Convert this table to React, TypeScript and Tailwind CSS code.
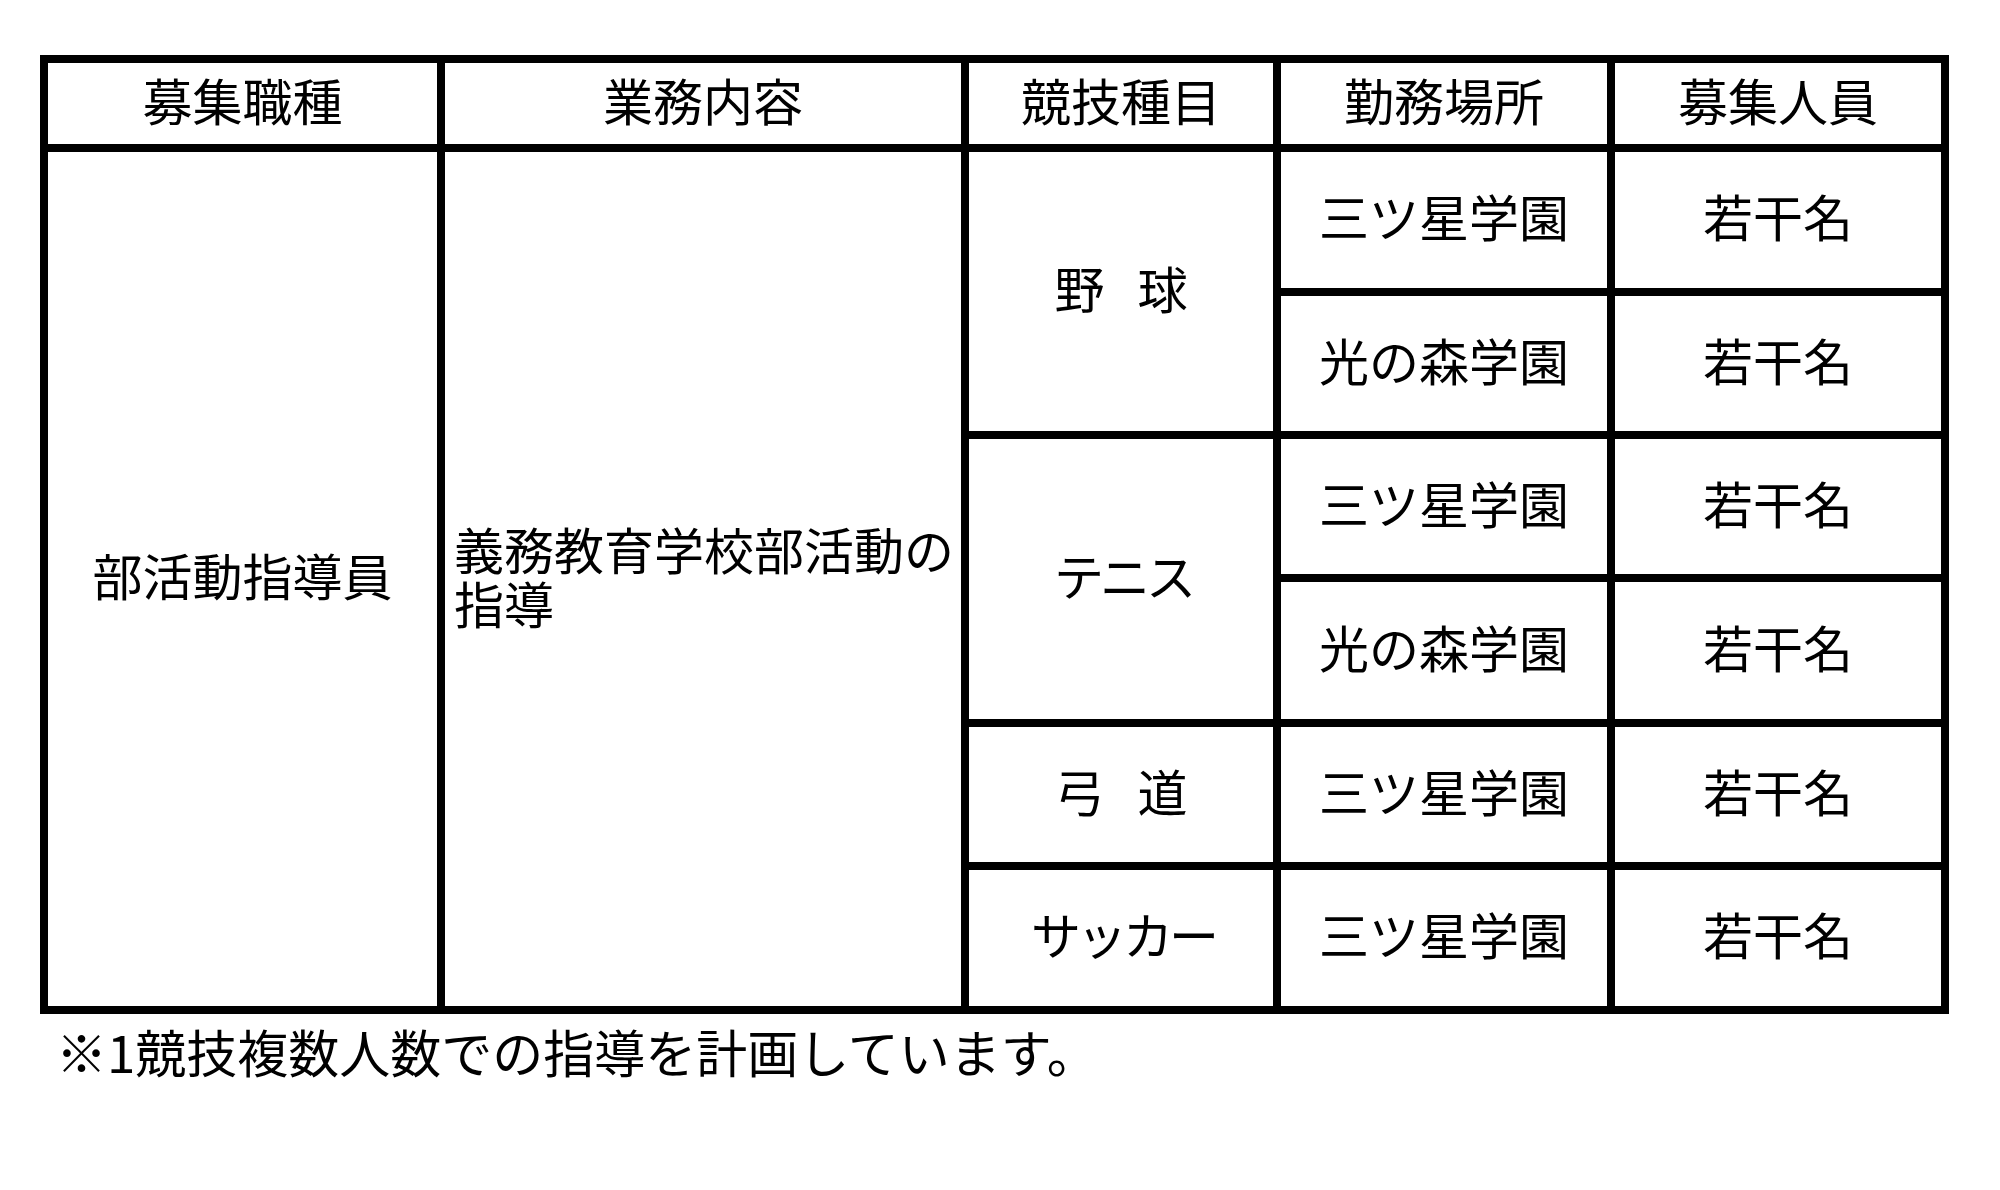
import React from "react";

const cell = "bg-white flex items-center justify-center pb-[10px]";

export default function App() {
  const rowsRight = [
    { place: "三ツ星学園", row: "row-start-2" },
    { place: "光の森学園", row: "row-start-3" },
    { place: "三ツ星学園", row: "row-start-4" },
    { place: "光の森学園", row: "row-start-5" },
    { place: "三ツ星学園", row: "row-start-6" },
    { place: "三ツ星学園", row: "row-start-7" },
  ];
  return (
    <div className="min-h-[1190px] w-[2000px] bg-white text-black font-['Noto_Sans_CJK_JP','Noto_Sans',sans-serif] text-[50px] leading-none">
      <div className="pt-[55px] pl-[40px]">
        <div className="w-[1909px] bg-black p-[8px] grid grid-cols-[389px_516px_304px_326px_326px] grid-rows-[81px_136px_135px_135px_137px_135px_136px] gap-[8px]">
          <div className={`${cell} col-start-1 row-start-1`}>募集職種</div>
          <div className={`${cell} col-start-2 row-start-1`}>業務内容</div>
          <div className={`${cell} col-start-3 row-start-1`}>競技種目</div>
          <div className={`${cell} col-start-4 row-start-1`}>勤務場所</div>
          <div className={`${cell} col-start-5 row-start-1`}>募集人員</div>

          <div className={`${cell} col-start-1 row-start-2 row-span-6`}>部活動指導員</div>
          <div className="bg-white flex items-center justify-start col-start-2 row-start-2 row-span-6 pl-[9px]">
            <div className="leading-[54px] pb-[8px]">
              義務教育学校部活動の
              <br />
              指導
            </div>
          </div>

          <div className={`${cell} col-start-3 row-start-2 row-span-2`}>
            <span>野</span>
            <span className="inline-block w-[33px]"> </span>
            <span>球</span>
          </div>
          <div className={`${cell} col-start-3 row-start-4 row-span-2`}>
            <span className="tracking-[-4px] pl-[4px]">テニス</span>
          </div>
          <div className={`${cell} col-start-3 row-start-6`}>
            <span>弓</span>
            <span className="inline-block w-[33px]"> </span>
            <span>道</span>
          </div>
          <div className={`${cell} col-start-3 row-start-7`}>
            <span className="tracking-[-4px] pl-[4px]">サッカー</span>
          </div>

          {rowsRight.map((r, i) => (
            <React.Fragment key={i}>
              <div className={`${cell} col-start-4 ${r.row}`}>{r.place}</div>
              <div className={`${cell} col-start-5 ${r.row}`}>若干名</div>
            </React.Fragment>
          ))}
        </div>
        <div className="mt-[12px] pl-[16px] text-[51px]">※1競技複数人数での指導を計画しています。</div>
      </div>
    </div>
  );
}
